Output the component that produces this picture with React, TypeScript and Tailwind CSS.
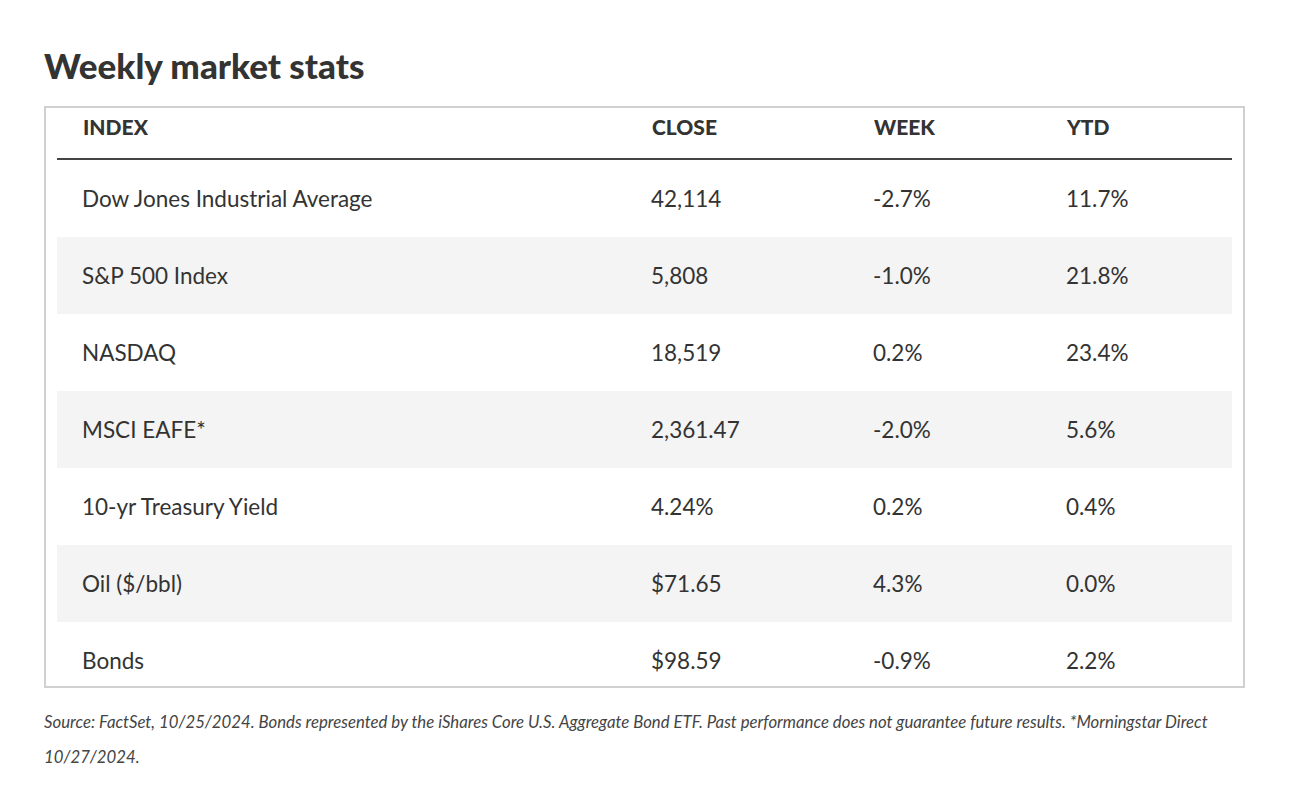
const rows = [
  { name: "Dow Jones Industrial Average", close: "42,114", week: "-2.7%", ytd: "11.7%" },
  { name: "S&P 500 Index", close: "5,808", week: "-1.0%", ytd: "21.8%" },
  { name: "NASDAQ", close: "18,519", week: "0.2%", ytd: "23.4%" },
  { name: "MSCI EAFE*", close: "2,361.47", week: "-2.0%", ytd: "5.6%" },
  { name: "10-yr Treasury Yield", close: "4.24%", week: "0.2%", ytd: "0.4%" },
  { name: "Oil ($/bbl)", close: "$71.65", week: "4.3%", ytd: "0.0%" },
  { name: "Bonds", close: "$98.59", week: "-0.9%", ytd: "2.2%" },
];

const cols = "grid grid-cols-[569px_222px_193px_192px]";

export default function App() {
  return (
    <div className="min-h-screen bg-white pl-[44px] pr-[47px] pt-[43px] text-[#333] font-['Lato',sans-serif]">
      <h1 className="text-[35px] font-black leading-[44px] text-[#333]">Weekly market stats</h1>

      <div className="mt-[19px] h-[582px] overflow-hidden border-2 border-[#d0d0d0] px-[11px]">
        <div className={`${cols} h-[52px] items-center border-b-2 border-[#444] pb-[13px] text-[21px] font-black uppercase`}>
          <div className="pl-[26px]">Index</div>
          <div className="pl-[26px]">Close</div>
          <div className="pl-[26px]">Week</div>
          <div className="pl-[26px]">YTD</div>
        </div>
        {rows.map((r, i) => (
          <div
            key={r.name}
            className={`${cols} h-[77px] items-center pt-[1px] text-[22.5px] ${i % 2 === 1 ? "bg-[#f4f4f4]" : "bg-white"}`}
          >
            <div className="pl-[25px]">{r.name}</div>
            <div className="pl-[25px]">{r.close}</div>
            <div className="pl-[25px]">{r.week}</div>
            <div className="pl-[25px]">{r.ytd}</div>
          </div>
        ))}
      </div>

      <p className="mt-[16px] text-[16.75px] italic leading-[35px] text-[#444]">
        Source: FactSet, 10/25/2024. Bonds represented by the iShares Core U.S. Aggregate Bond ETF. Past performance does not guarantee future results. *Morningstar Direct 10/27/2024.
      </p>
    </div>
  );
}
